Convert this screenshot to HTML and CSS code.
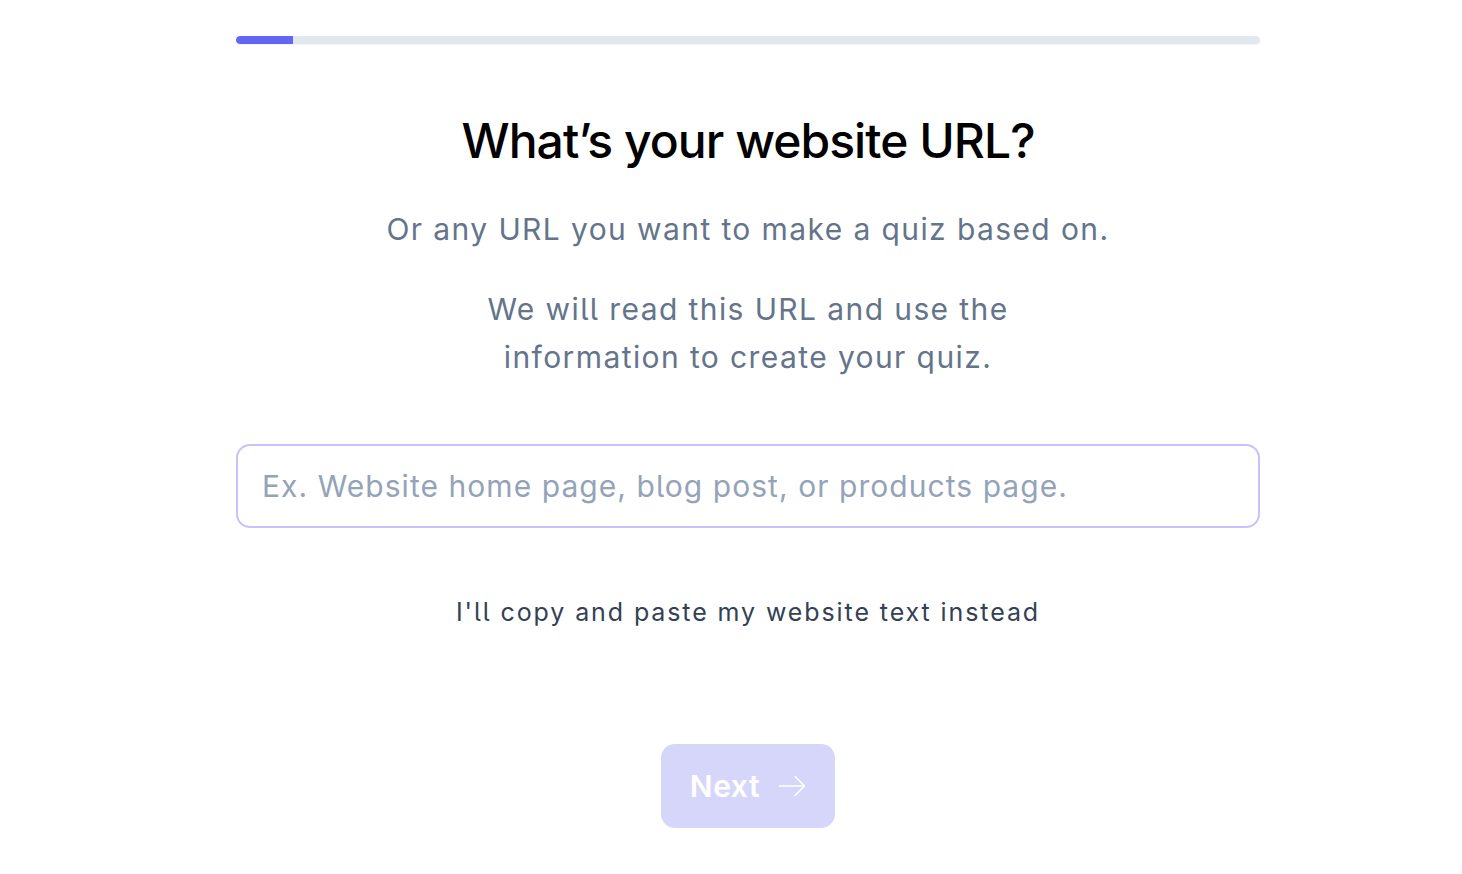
FILE: index.html
```html
<!DOCTYPE html>
<html lang="en">
<head>
<meta charset="utf-8">
<title>Quiz setup</title>
<link rel="stylesheet" href="styles.css">
</head>
<body>
<main class="wrap">
  <div class="progress"><div class="progress-fill" style="width:5.6%"></div></div>
  <h1 class="title">What’s your website URL?</h1>
  <p class="sub">Or any URL you want to make a quiz based on.</p>
  <p class="sub sub-narrow">We will read this URL and use the information to create your quiz.</p>
  <input class="url-input" type="text" placeholder="Ex. Website home page, blog post, or products page.">
  <a class="alt-link" href="#">I'll copy and paste my website text instead</a>
  <button class="next-btn" type="button"><span>Next</span>
    <svg width="28" height="22" viewBox="0 0 28 22" fill="none" stroke="currentColor" stroke-width="1.6" stroke-linecap="round" stroke-linejoin="round"><path d="M1.5 11h25M17 1.5l9.5 9.5-9.5 9.5"/></svg>
  </button>
</main>
</body>
</html>
```
FILE: styles.css
```css
* { box-sizing: border-box; }
html, body { margin: 0; padding: 0; background: #fff; }
body { font-family: Inter, "Noto Sans", sans-serif; font-feature-settings: "cv05" 1; }
.wrap {
  width: 1024px;
  margin-left: 236px;
  padding-top: 36px;
  display: flex;
  flex-direction: column;
  align-items: center;
}
.progress {
  width: 100%;
  height: 8px;
  border-radius: 8px;
  background: #e2e8f0;
  overflow: hidden;
  box-shadow: 0 1px 2px rgba(0,0,0,0.05);
}
.progress-fill { height: 100%; background: #6366f1; border-radius: 8px 0 0 8px; }
.title {
  margin: 67px 0 0;
  font-size: 48px;
  line-height: 60px;
  font-weight: 500;
  color: #000;
  letter-spacing: -0.95px;
}
.sub {
  margin: 34px 0 0;
  font-size: 30px;
  line-height: 48px;
  color: #64748b;
  text-align: center;
  letter-spacing: 1.4px;
}
.sub-narrow { margin-top: 32px; max-width: 600px; }
.url-input {
  margin-top: 63px;
  width: 100%;
  height: 84px;
  border: 2px solid #c9c1fb;
  border-radius: 14px;
  padding: 0 24px;
  font-family: inherit;
  font-feature-settings: "cv05" 1;
  font-size: 30px;
  letter-spacing: 1.05px;
  color: #334155;
  outline: none;
}
.url-input::placeholder { color: #94a3b8; }
.alt-link {
  margin-top: 66px;
  font-size: 25px;
  line-height: 36px;
  color: #334155;
  text-decoration: none;
  letter-spacing: 1.9px;
}
.next-btn {
  margin-top: 114px;
  width: 174px;
  height: 84px;
  border: none;
  border-radius: 14px;
  background: #d6d6fb;
  color: #fff;
  font-family: inherit;
  font-size: 30px;
  font-weight: 600;
  letter-spacing: 0.6px;
  display: flex;
  align-items: center;
  justify-content: center;
  gap: 18px;
  padding: 0;
}
```
